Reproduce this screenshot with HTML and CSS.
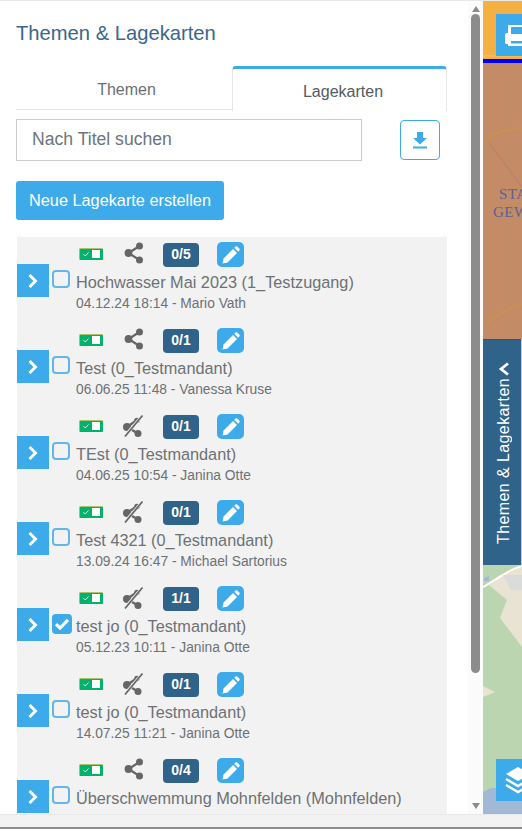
FILE: index.html
```html
<!DOCTYPE html>
<html lang="de">
<head>
    <meta charset="UTF-8">
    <meta name="viewport" content="width=device-width, initial-scale=1.0">
    <title>Themen &amp; Lagekarten</title>
    <link rel="stylesheet" href="styles.css">
</head>
<body>

<svg class="iconDefs" aria-hidden="true">
    <symbol id="iconChevron" viewBox="0 0 12 16">
        <path d="M2.500 2 L8.500 8 L2.500 14" fill="none" stroke="currentColor" stroke-width="3"/>
    </symbol>
    <symbol id="iconToggle" viewBox="0 0 24 12">
        <rect width="24" height="12" rx="1" fill="#e3c46c"/>
        <rect x="0.7" y="0.7" width="23.3" height="11.3" rx="1" fill="#00b26b"/>
        <rect x="13" y="2" width="8" height="8" fill="#fff"/>
        <path d="M4.500 6.200 L6.300 8 L9.500 4.500" fill="none" stroke="#d8f5e6" stroke-width="1"/>
    </symbol>
    <symbol id="iconShare" viewBox="0 0 20 22">
        <path d="M15.500 4 L4.500 11 L15.500 18" fill="none" stroke="#666" stroke-width="2.200"/>
        <circle cx="15.500" cy="4" r="3.500" fill="#666"/>
        <circle cx="4.500" cy="11" r="3.900" fill="#666"/>
        <circle cx="15.500" cy="18" r="3.500" fill="#666"/>
    </symbol>
    <symbol id="iconUnshare" viewBox="0 0 22 24">
        <path d="M16 5.500 L5 13 L16 19.500" fill="none" stroke="#666" stroke-width="2.400"/>
        <circle cx="15" cy="6.500" r="2.800" fill="#666"/>
        <circle cx="5" cy="13" r="4" fill="#666"/>
        <circle cx="16" cy="19.500" r="3.500" fill="#666"/>
        <path d="M2 23 L21 1" fill="none" stroke="#f2f2f2" stroke-width="3"/>
        <path d="M3 22.500 L20.500 1.500" fill="none" stroke="#666" stroke-width="1.800"/>
    </symbol>
    <symbol id="iconPencil" viewBox="0 0 18 18">
        <path d="M0.500 17.500 L1.500 12.500 L11 3 L15 7 L5.500 16.500 Z M12.200 1.800 L13.400 0.700 C14 0.200 14.800 0.200 15.400 0.700 L17.300 2.600 C17.800 3.200 17.800 4 17.300 4.600 L16.200 5.800 Z" fill="#fff"/>
    </symbol>
    <symbol id="iconCheck" viewBox="0 0 16 14">
        <path d="M2 7.200 L6 11 L14 2.800" fill="none" stroke="#fff" stroke-width="3.200"/>
    </symbol>
</svg>

<div class="page">
    <aside class="sidebar">
        <h1 class="sidebarTitle">Themen &amp; Lagekarten</h1>

        <div class="tabs">
            <div class="tab">Themen</div>
            <div class="tab tabActive">Lagekarten</div>
        </div>

        <div class="searchRow">
            <input type="text" class="searchInput" placeholder="Nach Titel suchen">
            <button type="button" class="downloadButton" aria-label="Herunterladen">
                <svg width="14" height="17" viewBox="0 0 14 17">
                    <path d="M4 0 H10 V6 H14 L7 12.500 L0 6 H4 Z" fill="#3daae9"/>
                    <rect y="14.500" width="14" height="2" fill="#3daae9"/>
                </svg>
            </button>
        </div>

        <button type="button" class="newButton">Neue Lagekarte erstellen</button>

        <div class="mapList">
            <div class="mapItem">
                <button type="button" class="expandButton"><svg width="12" height="16"><use href="#iconChevron"/></svg></button>
                <span class="checkBox"></span>
                <div class="mapBody">
                    <div class="mapTools">
                        <svg class="toggleIcon" width="24" height="12"><use href="#iconToggle"/></svg>
                        <svg class="shareIcon" width="20" height="22"><use href="#iconShare"/></svg>
                        <span class="countBadge">0/5</span>
                        <span class="editButton"><svg width="18" height="18"><use href="#iconPencil"/></svg></span>
                    </div>
                    <div class="mapTitle">Hochwasser Mai 2023 (1_Testzugang)</div>
                    <div class="mapMeta">04.12.24 18:14 - Mario Vath</div>
                </div>
            </div>

            <div class="mapItem">
                <button type="button" class="expandButton"><svg width="12" height="16"><use href="#iconChevron"/></svg></button>
                <span class="checkBox"></span>
                <div class="mapBody">
                    <div class="mapTools">
                        <svg class="toggleIcon" width="24" height="12"><use href="#iconToggle"/></svg>
                        <svg class="shareIcon" width="20" height="22"><use href="#iconShare"/></svg>
                        <span class="countBadge">0/1</span>
                        <span class="editButton"><svg width="18" height="18"><use href="#iconPencil"/></svg></span>
                    </div>
                    <div class="mapTitle">Test (0_Testmandant)</div>
                    <div class="mapMeta">06.06.25 11:48 - Vanessa Kruse</div>
                </div>
            </div>

            <div class="mapItem">
                <button type="button" class="expandButton"><svg width="12" height="16"><use href="#iconChevron"/></svg></button>
                <span class="checkBox"></span>
                <div class="mapBody">
                    <div class="mapTools">
                        <svg class="toggleIcon" width="24" height="12"><use href="#iconToggle"/></svg>
                        <svg class="unshareIcon" width="22" height="24"><use href="#iconUnshare"/></svg>
                        <span class="countBadge">0/1</span>
                        <span class="editButton"><svg width="18" height="18"><use href="#iconPencil"/></svg></span>
                    </div>
                    <div class="mapTitle">TEst (0_Testmandant)</div>
                    <div class="mapMeta">04.06.25 10:54 - Janina Otte</div>
                </div>
            </div>

            <div class="mapItem">
                <button type="button" class="expandButton"><svg width="12" height="16"><use href="#iconChevron"/></svg></button>
                <span class="checkBox"></span>
                <div class="mapBody">
                    <div class="mapTools">
                        <svg class="toggleIcon" width="24" height="12"><use href="#iconToggle"/></svg>
                        <svg class="unshareIcon" width="22" height="24"><use href="#iconUnshare"/></svg>
                        <span class="countBadge">0/1</span>
                        <span class="editButton"><svg width="18" height="18"><use href="#iconPencil"/></svg></span>
                    </div>
                    <div class="mapTitle">Test 4321 (0_Testmandant)</div>
                    <div class="mapMeta">13.09.24 16:47 - Michael Sartorius</div>
                </div>
            </div>

            <div class="mapItem">
                <button type="button" class="expandButton"><svg width="12" height="16"><use href="#iconChevron"/></svg></button>
                <span class="checkBox checkBoxOn"><svg width="16" height="14"><use href="#iconCheck"/></svg></span>
                <div class="mapBody">
                    <div class="mapTools">
                        <svg class="toggleIcon" width="24" height="12"><use href="#iconToggle"/></svg>
                        <svg class="unshareIcon" width="22" height="24"><use href="#iconUnshare"/></svg>
                        <span class="countBadge">1/1</span>
                        <span class="editButton"><svg width="18" height="18"><use href="#iconPencil"/></svg></span>
                    </div>
                    <div class="mapTitle">test jo (0_Testmandant)</div>
                    <div class="mapMeta">05.12.23 10:11 - Janina Otte</div>
                </div>
            </div>

            <div class="mapItem">
                <button type="button" class="expandButton"><svg width="12" height="16"><use href="#iconChevron"/></svg></button>
                <span class="checkBox"></span>
                <div class="mapBody">
                    <div class="mapTools">
                        <svg class="toggleIcon" width="24" height="12"><use href="#iconToggle"/></svg>
                        <svg class="unshareIcon" width="22" height="24"><use href="#iconUnshare"/></svg>
                        <span class="countBadge">0/1</span>
                        <span class="editButton"><svg width="18" height="18"><use href="#iconPencil"/></svg></span>
                    </div>
                    <div class="mapTitle">test jo (0_Testmandant)</div>
                    <div class="mapMeta">14.07.25 11:21 - Janina Otte</div>
                </div>
            </div>

            <div class="mapItem">
                <button type="button" class="expandButton"><svg width="12" height="16"><use href="#iconChevron"/></svg></button>
                <span class="checkBox"></span>
                <div class="mapBody">
                    <div class="mapTools">
                        <svg class="toggleIcon" width="24" height="12"><use href="#iconToggle"/></svg>
                        <svg class="shareIcon" width="20" height="22"><use href="#iconShare"/></svg>
                        <span class="countBadge">0/4</span>
                        <span class="editButton"><svg width="18" height="18"><use href="#iconPencil"/></svg></span>
                    </div>
                    <div class="mapTitle">Überschwemmung Mohnfelden (Mohnfelden)</div>
                </div>
            </div>
        </div>
    </aside>

    <div class="scrollTrack">
        <span class="scrollArrowUp"></span>
        <span class="scrollThumb"></span>
        <span class="scrollArrowDown"></span>
    </div>

    <main class="mapArea">
        <svg class="mapBackground" width="39" height="814" viewBox="0 0 39 814">
            <rect width="39" height="59" fill="#f4b042"/>
            <path d="M0 56 H39" stroke="#f8c777" stroke-width="1"/>
            <rect y="59" width="39" height="4" fill="#0000ff"/>
            <rect y="63" width="39" height="276" fill="#c38b66"/>
            <path d="M6 143 L39 187" fill="none" stroke="#b98468" stroke-width="1.500"/>
            <path d="M0 141 C12 132 26 129 39 128" fill="none" stroke="#c98f58" stroke-width="3"/>
            <path d="M0 325 C12 318 26 306 39 304" fill="none" stroke="#c98f58" stroke-width="3"/>
            <rect y="339" width="39" height="475" fill="#bcd5b1"/>
            <path d="M6 585 L24 600 L17 618 L39 647 V566 L20 575 Z" fill="#e9e3d3"/>
            <path d="M0 686 L12 692 L0 697 Z" fill="#e9e3d3"/>
            <path d="M1 578 L6 576 L6 581 L1 581 Z" fill="#a0b9d4"/>
            <path d="M0 587 C8 583 14 578 20 575 C26 571 32 568 39 566" fill="none" stroke="#fff" stroke-width="2"/>
            <path d="M20 575 H39 V590 H28 Z" fill="#d9dcd8"/>
            <path d="M0 792 L8 788 H39 V814 H0 Z" fill="#a0b9d4"/>
        </svg>
        <span class="mapLabel mapLabelTop">STA</span>
        <span class="mapLabel mapLabelBottom">GEW</span>

        <button type="button" class="mapButton printButton" aria-label="Drucken">
            <svg width="30" height="24" viewBox="0 0 30 24">
                <path d="M5 2 H25 V10 H27 Q29 10 29 12 V21 H25 V23 H5 V21 H3 Q2 21 2 19 V12 Q2 10 4 10 H5 Z" fill="#fff"/>
                <path d="M8 4 H22 V11 H8 Z M8 18 H22 V20.500 H8 Z" fill="#3daae9"/>
            </svg>
        </button>

        <div class="sideTab">
            <svg width="12" height="14" viewBox="0 0 12 14">
                <path d="M10 1.500 L3 7 L10 12.500" fill="none" stroke="#fff" stroke-width="2.800"/>
            </svg>
            <span class="sideTabText">Themen &amp; Lagekarten</span>
        </div>

        <button type="button" class="mapButton layersButton" aria-label="Ebenen">
            <svg width="26" height="28" viewBox="0 0 26 28">
                <path d="M13 1 L25 8 L13 15 L1 8 Z" fill="#fff"/>
                <path d="M1 13 L13 20 L25 13 M1 19 L13 26 L25 19" fill="none" stroke="#fff" stroke-width="2.400"/>
            </svg>
        </button>
    </main>
</div>

<footer class="bottomStrip"></footer>

</body>
</html>
```

FILE: styles.css
```css
* {
    box-sizing: border-box;
}
html, body {
    margin: 0;
    height: 831px;
    overflow: hidden;
}
body {
    font-family: "Liberation Sans", Arial, sans-serif;
    background-color: #fff;
    display: flex;
    flex-direction: column;
}
button {
    font-family: inherit;
    cursor: pointer;
}
.iconDefs {
    display: none;
}
.page {
    display: flex;
    flex: none;
    height: 814px;
    border-top: 1px solid #e9e9e9;
}
.sidebar {
    width: 468px;
    padding: 0 21px 0 16px;
    display: flex;
    flex-direction: column;
    overflow: hidden;
}
.sidebarTitle {
    margin: 20px 0 21px;
    font-size: 20.2px;
    line-height: 24px;
    font-weight: 400;
    color: #3a6789;
}
.tabs {
    display: flex;
    height: 44px;
}
.tab {
    width: 216px;
    padding: 15px 0 0 5px;
    text-align: center;
    font-size: 16px;
    line-height: 18px;
    color: #6b6f73;
    border-bottom: 1px solid #e3e3e3;
}
.tabActive {
    width: 215px;
    height: 45px;
    padding: 14px 0 0 7px;
    color: #555b61;
    border: 1px solid #e6e6e6;
    border-top: 3px solid #3daae9;
    border-bottom: none;
    border-radius: 4px 4px 0 0;
}
.searchRow {
    display: flex;
    align-items: center;
    margin-top: 9px;
}
.searchInput {
    width: 346px;
    height: 42px;
    padding: 0 15px 2px;
    font-family: inherit;
    font-size: 17.6px;
    border: 1px solid #ccc;
    color: #6c757d;
}
.searchInput::placeholder {
    color: #6c757d;
    opacity: 1;
}
.downloadButton {
    width: 40px;
    height: 40px;
    margin-left: 38px;
    padding: 0;
    background: #fff;
    border: 1px solid #3daae9;
    border-radius: 4px;
    display: flex;
    align-items: center;
    justify-content: center;
}
.newButton {
    width: 208px;
    height: 39px;
    margin-top: 20px;
    padding: 0;
    background-color: #3daae9;
    border: none;
    border-radius: 3px;
    color: #fff;
    font-size: 16.3px;
}
.mapList {
    flex: 1;
    min-height: 0;
    margin: 17px 0 0 1px;
    padding-top: 5px;
    background-color: #f2f2f2;
    overflow: hidden;
}
.mapItem {
    display: flex;
    align-items: flex-start;
    height: 86px;
}
.expandButton {
    width: 32px;
    height: 33px;
    margin-top: 22px;
    padding: 0;
    background-color: #3daae9;
    border: none;
    color: #fff;
    display: flex;
    align-items: center;
    justify-content: center;
}
.checkBox {
    width: 18px;
    height: 18px;
    margin: 28px 0 0 3px;
    border: 2px solid #62b6ea;
    border-radius: 4px;
    display: flex;
    align-items: center;
    justify-content: center;
}
.checkBoxOn {
    width: 20px;
    height: 20px;
    margin-right: -2px;
    background-color: #3daae9;
    border-color: #3daae9;
}
.mapBody {
    margin-left: 6px;
    flex: 1;
}
.mapTools {
    display: flex;
    align-items: center;
    height: 25px;
    margin-bottom: 4px;
}
.toggleIcon {
    margin: 0 0 1px 3px;
}
.shareIcon {
    margin: -3px 0 0 21px;
}
.unshareIcon {
    margin: -1px 0 0 19px;
}
.countBadge {
    width: 36px;
    height: 24px;
    margin-left: 19px;
    background-color: #2f6389;
    border-radius: 4px;
    color: #fff;
    font-size: 14px;
    font-weight: bold;
    line-height: 22px;
    text-align: center;
}
.editButton {
    width: 27px;
    height: 25px;
    margin-left: 18px;
    background-color: #3daae9;
    border-radius: 5px;
    display: flex;
    align-items: center;
    justify-content: center;
}
.mapTitle {
    font-size: 16.3px;
    line-height: 22px;
    color: #6d7175;
    white-space: nowrap;
}
.mapMeta {
    font-size: 13.8px;
    line-height: 21px;
    color: #6d7175;
    white-space: nowrap;
}
.scrollTrack {
    width: 15px;
    background-color: #fbfbfb;
    display: flex;
    flex-direction: column;
    align-items: center;
}
.scrollArrowUp {
    margin-top: 5px;
    border: 4.5px solid transparent;
    border-top: none;
    border-bottom: 6px solid #8c8c8c;
}
.scrollThumb {
    width: 9px;
    height: 659px;
    margin-top: 2px;
    background-color: #8c8c8c;
    border-radius: 5px;
}
.scrollArrowDown {
    margin-top: auto;
    margin-bottom: 5px;
    border: 4.5px solid transparent;
    border-bottom: none;
    border-top: 6px solid #8c8c8c;
}
.mapArea {
    position: relative;
    flex: 1;
    overflow: hidden;
}
.mapBackground {
    position: absolute;
    left: 0;
    top: -1px;
}
.mapLabel {
    position: absolute;
    font-family: "Liberation Serif", serif;
    font-size: 15px;
    letter-spacing: 0.5px;
    color: #5a6196;
}
.mapLabelTop {
    left: 16px;
    top: 185px;
}
.mapLabelBottom {
    left: 10px;
    top: 203px;
}
.mapButton {
    position: absolute;
    left: 13px;
    width: 42px;
    height: 42px;
    padding: 0 0 0 2px;
    background-color: #3daae9;
    border: none;
    display: flex;
    align-items: center;
    justify-content: center;
}
.printButton {
    top: 13px;
}
.layersButton {
    top: 758px;
}
.sideTab {
    position: absolute;
    left: 0;
    top: 338px;
    width: 38px;
    height: 226px;
    padding: 22px 0 0 4px;
    background-color: #2f6389;
    border-top: 1px solid #1f4fb0;
    color: #fff;
    display: flex;
    flex-direction: column;
    align-items: center;
    gap: 2px;
}
.sideTabText {
    writing-mode: vertical-rl;
    transform: rotate(180deg);
    font-size: 16px;
    line-height: 18px;
    letter-spacing: 0.4px;
    white-space: nowrap;
}
.bottomStrip {
    flex: none;
    height: 15px;
    background-color: #f2f2f2;
    border-top: 1px solid #e8e8e8;
    border-bottom: 2px solid #8c8c8c;
}
```
